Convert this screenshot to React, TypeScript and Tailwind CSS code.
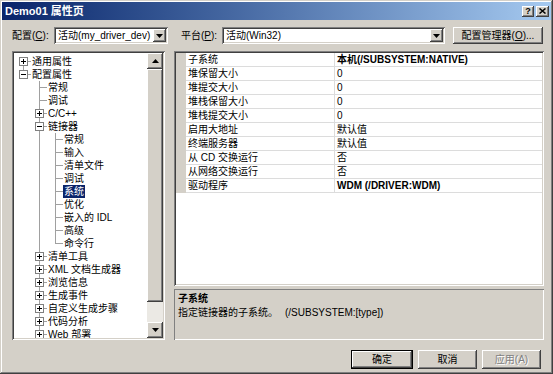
import React from 'react';

const raised =
  'shadow-[inset_-1px_-1px_0_#404040,inset_1px_1px_0_#ffffff,inset_-2px_-2px_0_#808080,inset_2px_2px_0_#d4d0c8]';
const sunken =
  'shadow-[inset_1px_1px_0_#808080,inset_-1px_-1px_0_#ffffff,inset_2px_2px_0_#404040,inset_-2px_-2px_0_#d4d0c8]';

type TreeItem = {
  t: string;
  box?: 'plus' | 'minus';
  sel?: boolean;
  up: boolean;
  down: boolean;
  guides: boolean[];
};

const l1 = (t: string, box?: 'plus' | 'minus'): TreeItem => ({ t, box, up: true, down: true, guides: [false] });
const l2 = (t: string, extra: Partial<TreeItem> = {}): TreeItem => ({
  t,
  up: true,
  down: true,
  guides: [false, true],
  ...extra,
});

const tree: TreeItem[] = [
  { t: '通用属性', box: 'plus', up: false, down: true, guides: [] },
  { t: '配置属性', box: 'minus', up: true, down: false, guides: [] },
  l1('常规'),
  l1('调试'),
  l1('C/C++', 'plus'),
  l1('链接器', 'minus'),
  l2('常规'),
  l2('输入'),
  l2('清单文件'),
  l2('调试'),
  l2('系统', { sel: true }),
  l2('优化'),
  l2('嵌入的 IDL'),
  l2('高级'),
  l2('命令行', { down: false }),
  l1('清单工具', 'plus'),
  l1('XML 文档生成器', 'plus'),
  l1('浏览信息', 'plus'),
  l1('生成事件', 'plus'),
  l1('自定义生成步骤', 'plus'),
  l1('代码分析', 'plus'),
  l1('Web 部署', 'plus'),
];

const props: { name: string; value: string; bold?: boolean }[] = [
  { name: '子系统', value: '本机(/SUBSYSTEM:NATIVE)', bold: true },
  { name: '堆保留大小', value: '0' },
  { name: '堆提交大小', value: '0' },
  { name: '堆栈保留大小', value: '0' },
  { name: '堆栈提交大小', value: '0' },
  { name: '启用大地址', value: '默认值' },
  { name: '终端服务器', value: '默认值' },
  { name: '从 CD 交换运行', value: '否' },
  { name: '从网络交换运行', value: '否' },
  { name: '驱动程序', value: 'WDM (/DRIVER:WDM)', bold: true },
];

function Arrow({ dir }: { dir: 'up' | 'down' }) {
  return (
    <svg width="7" height="4" viewBox="0 0 7 4">
      <polygon points={dir === 'down' ? '0,0 7,0 3.5,4' : '0,4 7,4 3.5,0'} fill="#000" />
    </svg>
  );
}

function Combo({ value, className }: { value: string; className: string }) {
  return (
    <div className={`${className} h-[17px] bg-white ${sunken} flex items-center p-[2px]`}>
      <span className="flex-1 pl-[2px] whitespace-nowrap overflow-hidden">{value}</span>
      <div className={`w-[13px] h-full bg-[#d4d0c8] ${raised} flex items-center justify-center`}>
        <Arrow dir="down" />
      </div>
    </div>
  );
}

function TreeRow({ it }: { it: TreeItem }) {
  const line = '#a0a0a0';
  return (
    <div className="flex h-[13px] items-center whitespace-nowrap">
      {it.guides.map((g, i) => (
        <svg key={i} width="16" height="13" className="shrink-0">
          {g && <line x1="8.5" y1="0" x2="8.5" y2="13" stroke={line} />}
        </svg>
      ))}
      <svg width="16" height="13" className="shrink-0">
        {it.up && <line x1="8.5" y1="0" x2="8.5" y2="6.5" stroke={line} />}
        {it.down && <line x1="8.5" y1="6.5" x2="8.5" y2="13" stroke={line} />}
        <line x1="8" y1="6.5" x2="16" y2="6.5" stroke={line} />
        {it.box && (
          <>
            <rect x="4.5" y="2.5" width="8" height="8" fill="#fff" stroke="#808080" />
            <line x1="6" y1="6.5" x2="11" y2="6.5" stroke="#000" />
            {it.box === 'plus' && <line x1="8.5" y1="4" x2="8.5" y2="9" stroke="#000" />}
          </>
        )}
      </svg>
      <span className={`px-[1px] leading-[13px] ${it.sel ? 'bg-[#0a246a] text-white' : 'text-black'}`}>{it.t}</span>
    </div>
  );
}

function Button({
  children,
  def,
  disabled,
  className = '',
}: {
  children: React.ReactNode;
  def?: boolean;
  disabled?: boolean;
  className?: string;
}) {
  return (
    <div className={`${className} ${def ? 'border border-black' : ''} bg-[#d4d0c8]`}>
      <div
        className={`w-full h-full ${raised} flex items-center justify-center ${
          disabled ? 'text-[#808080] [text-shadow:1px_1px_0_#ffffff]' : 'text-black'
        }`}
      >
        {children}
      </div>
    </div>
  );
}

export default function App() {
  return (
    <div className="w-[553px] h-[374px] overflow-hidden bg-[#d4d0c8] font-['Liberation_Sans','Noto_Sans_CJK_SC',sans-serif] text-[10px] text-black shadow-[inset_-1px_-1px_0_#404040,inset_1px_1px_0_#d4d0c8,inset_-2px_-2px_0_#808080,inset_2px_2px_0_#ffffff] flex flex-col">
      {/* title bar */}
      <div className="mx-[2px] mt-[2px] h-[18px] bg-linear-to-r from-[#0a246a] to-[#a6caf0] flex items-center pl-[3px] pr-[2px]">
        <span className="flex-1 text-white font-bold text-[11px]">Demo01 属性页</span>
        <div className={`w-[12px] h-[11px] bg-[#d4d0c8] ${raised} flex items-center justify-center text-[9px] font-bold leading-none`}>
          ?
        </div>
        <div className={`ml-[2px] w-[13px] h-[11px] bg-[#d4d0c8] ${raised} flex items-center justify-center`}>
          <svg width="7" height="6" viewBox="0 0 7 6">
            <path d="M0.5 0.5 L6.5 5.5 M6.5 0.5 L0.5 5.5" stroke="#000" strokeWidth="1.5" />
          </svg>
        </div>
      </div>

      {/* configuration row */}
      <div className="mt-[7px] h-[17px] flex items-center pl-[12px]">
        <span className="w-[42px]">
          配置(<u>C</u>):
        </span>
        <Combo value="活动(my_driver_dev)" className="w-[114px]" />
        <span className="ml-[13px] w-[41px]">
          平台(<u>P</u>):
        </span>
        <Combo value="活动(Win32)" className="w-[223px]" />
        <Button className="ml-[8px] w-[90px] h-[17px]">
          配置管理器(<u>O</u>)...
        </Button>
      </div>

      {/* main area */}
      <div className="mt-[7px] h-[289px] flex pl-[12px]">
        {/* tree */}
        <div className={`w-[153px] h-full bg-white ${sunken} p-[2px] flex`}>
          <div className="flex-1 overflow-hidden pl-[1px] pt-[2px]">
            {tree.map((it, i) => (
              <TreeRow key={i} it={it} />
            ))}
          </div>
          <div className="w-[16px] h-full flex flex-col">
            <div className={`h-[16px] bg-[#d4d0c8] ${raised} flex items-center justify-center`}>
              <Arrow dir="up" />
            </div>
            <div className={`h-[233px] bg-[#d4d0c8] ${raised}`} />
            <div className="flex-1 bg-[#ebe9e4]" />
            <div className={`h-[16px] bg-[#d4d0c8] ${raised} flex items-center justify-center`}>
              <Arrow dir="down" />
            </div>
          </div>
        </div>

        {/* property grid + description */}
        <div className="ml-[9px] w-[370px] h-full flex flex-col">
          <div className={`h-[235px] bg-white ${sunken} p-[2px]`}>
            {props.map((p) => (
              <div key={p.name} className="flex h-[14px]">
                <div className="w-[10px] bg-[#d4d0c8]" />
                <div className="w-[149px] border-r border-b border-[#dcdcdc] pl-[2px] leading-[13px] whitespace-nowrap">
                  {p.name}
                </div>
                <div
                  className={`flex-1 border-b border-[#dcdcdc] pl-[2px] leading-[13px] whitespace-nowrap ${
                    p.bold ? 'font-bold' : ''
                  }`}
                >
                  {p.value}
                </div>
              </div>
            ))}
          </div>
          <div className="mt-[3px] flex-1 shadow-[inset_1px_1px_0_#808080,inset_-1px_-1px_0_#ffffff] px-[4px] pt-[3px] leading-[14px]">
            <div className="font-bold">子系统</div>
            <div className="flex">
              <span className="w-[107px]">指定链接器的子系统。</span>
              <span>(/SUBSYSTEM:[type])</span>
            </div>
          </div>
        </div>
      </div>

      {/* buttons */}
      <div className="mt-[10px] h-[19px] flex justify-end pr-[12px] gap-[5px]">
        <Button def className="w-[62px] h-full">
          确定
        </Button>
        <Button className="w-[59px] h-full">取消</Button>
        <Button disabled className="w-[59px] h-full">
          应用(A)
        </Button>
      </div>
    </div>
  );
}
